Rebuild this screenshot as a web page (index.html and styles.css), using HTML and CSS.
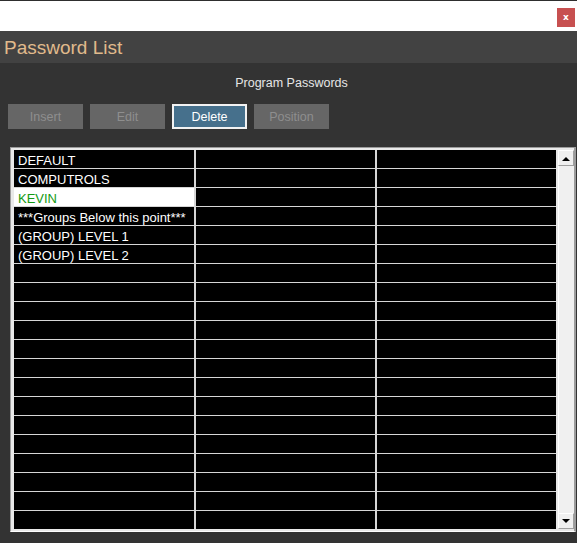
FILE: index.html
```html
<!DOCTYPE html>
<html>
<head>
<meta charset="utf-8">
<link rel="stylesheet" href="styles.css">
</head>
<body>
<div class="topbar">
  <div class="close">x</div>
</div>
<div class="titlebar">Password List</div>
<div class="subtitle">Program Passwords</div>
<div class="buttons">
  <div class="btn">Insert</div>
  <div class="btn">Edit</div>
  <div class="btn active">Delete</div>
  <div class="btn">Position</div>
</div>
<div class="frame">
  <div class="grid">
    <div class="cell">DEFAULT</div><div class="cell"></div><div class="cell"></div>
    <div class="cell">COMPUTROLS</div><div class="cell"></div><div class="cell"></div>
    <div class="cell sel">KEVIN</div><div class="cell"></div><div class="cell"></div>
    <div class="cell">***Groups Below this point***</div><div class="cell"></div><div class="cell"></div>
    <div class="cell">(GROUP) LEVEL 1</div><div class="cell"></div><div class="cell"></div>
    <div class="cell">(GROUP) LEVEL 2</div><div class="cell"></div><div class="cell"></div>
    <div class="cell"></div><div class="cell"></div><div class="cell"></div>
    <div class="cell"></div><div class="cell"></div><div class="cell"></div>
    <div class="cell"></div><div class="cell"></div><div class="cell"></div>
    <div class="cell"></div><div class="cell"></div><div class="cell"></div>
    <div class="cell"></div><div class="cell"></div><div class="cell"></div>
    <div class="cell"></div><div class="cell"></div><div class="cell"></div>
    <div class="cell"></div><div class="cell"></div><div class="cell"></div>
    <div class="cell"></div><div class="cell"></div><div class="cell"></div>
    <div class="cell"></div><div class="cell"></div><div class="cell"></div>
    <div class="cell"></div><div class="cell"></div><div class="cell"></div>
    <div class="cell"></div><div class="cell"></div><div class="cell"></div>
    <div class="cell"></div><div class="cell"></div><div class="cell"></div>
    <div class="cell"></div><div class="cell"></div><div class="cell"></div>
    <div class="cell"></div><div class="cell"></div><div class="cell"></div>
  </div>
  <div class="scrollbar">
    <div class="sbtn"><svg width="8" height="5" viewBox="0 0 8 5"><path d="M0 5 L4 1 L8 5 Z" fill="#000"/></svg></div>
    <div class="track"></div>
    <div class="sbtn"><svg width="8" height="5" viewBox="0 0 8 5"><path d="M0 0 L4 4 L8 0 Z" fill="#000"/></svg></div>
  </div>
</div>
</body>
</html>
```
FILE: styles.css
```css
html, body {
  margin: 0;
  padding: 0;
}
body {
  background: #333333;
  width: 577px;
  height: 543px;
  overflow: hidden;
  font-family: "Liberation Sans", Arial, sans-serif;
}
.topbar {
  height: 30px;
  background: #ffffff;
  border-top: 1px solid #2e2e2e;
  display: flex;
  justify-content: flex-end;
  align-items: flex-start;
}
.close {
  margin-top: 7px;
  margin-right: 2px;
  width: 18px;
  height: 19px;
  background: #c75050;
  color: #ffffff;
  font-family: "DejaVu Sans", sans-serif;
  font-weight: bold;
  font-size: 9px;
  line-height: 19px;
  text-align: center;
}
.titlebar {
  height: 32px;
  background: #424242;
  color: #e0ba8c;
  font-size: 19px;
  line-height: 32px;
  padding-left: 4px;
  padding-top: 1px;
  box-sizing: border-box;
}
.subtitle {
  margin-top: 12px;
  height: 16px;
  line-height: 16px;
  font-size: 12.5px;
  color: #e6e6e6;
  text-align: center;
  padding-left: 6px;
}
.buttons {
  margin-top: 13px;
  display: flex;
  gap: 7px;
  padding-left: 8px;
}
.btn {
  width: 75px;
  height: 25px;
  box-sizing: border-box;
  background: #666666;
  color: #8e8e8e;
  font-size: 12.5px;
  line-height: 24px;
  padding-top: 1px;
  text-align: center;
}
.btn.active {
  background: #46708c;
  color: #ffffff;
  border: 2px solid #f2f2f2;
  line-height: 20px;
}
.frame {
  margin-top: 18px;
  margin-left: 10px;
  width: 566px;
  height: 385px;
  box-sizing: border-box;
  background: #e9e9e9;
  border-top: 1px solid #9c9c9c;
  border-left: 1px solid #9c9c9c;
  border-right: 2px solid #9c9c9c;
  border-bottom: 1px solid #ffffff;
  padding: 2px 0 2px 3px;
  display: flex;
}
.grid {
  display: grid;
  grid-template-columns: 180px 179px 179px;
  grid-auto-rows: 18px;
  column-gap: 2px;
  row-gap: 1px;
  background: #d6d6d6;
  height: 379px;
  align-content: start;
}
.cell {
  background: #000000;
  color: #ffffff;
  font-size: 13px;
  line-height: 19px;
  height: 18px;
  box-sizing: border-box;
  padding: 1px 0 0 4px;
  white-space: nowrap;
  overflow: hidden;
}
.cell.sel {
  background: #ffffff;
  color: #139a13;
}
.scrollbar {
  margin-left: 2px;
  width: 16px;
  display: flex;
  flex-direction: column;
  background: #f0f0f0;
  height: 379px;
}
.sbtn {
  height: 16px;
  box-sizing: border-box;
  background: #f0f0f0;
  border-top: 1px solid #ffffff;
  border-left: 1px solid #ffffff;
  border-right: 1px solid #a0a0a0;
  border-bottom: 1px solid #a0a0a0;
  display: flex;
  align-items: center;
  justify-content: center;
}
.track {
  flex: 1;
  background: #f0f0f0;
  border-left: 1px solid #ffffff;
}
```
